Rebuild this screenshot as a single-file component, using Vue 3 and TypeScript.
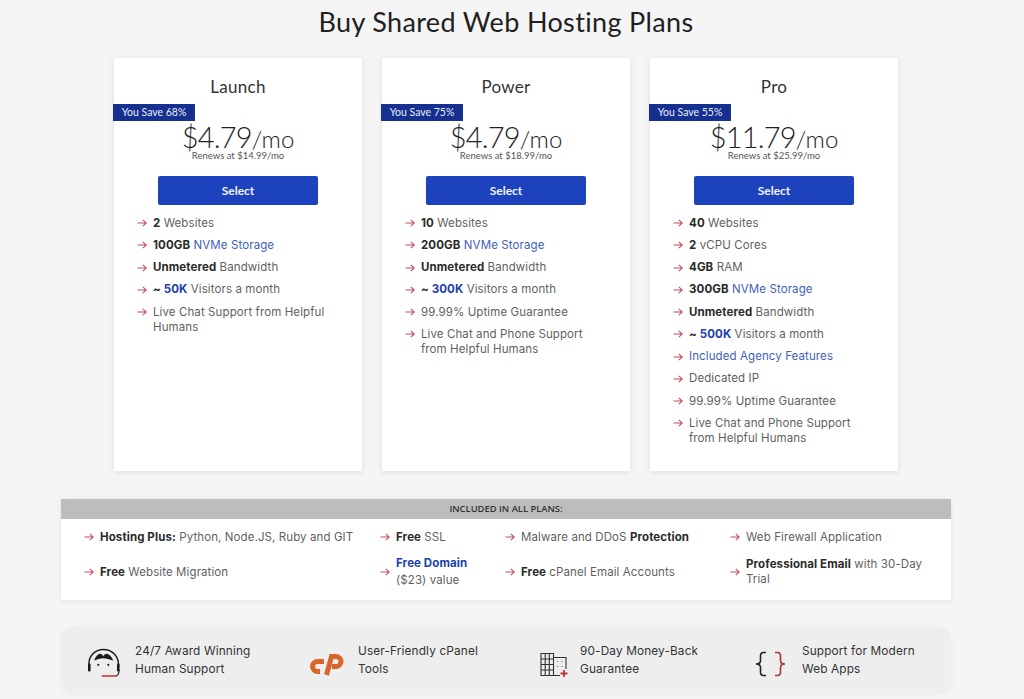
<script setup lang="ts">
interface Part {
  t: string
  b?: boolean
  link?: boolean
  block?: boolean
}

interface Plan {
  name: string
  save: string
  price: string
  renews: string
  features: Part[][]
}

const plans: Plan[] = [
  {
    name: 'Launch',
    save: 'You Save 68%',
    price: '$4.79',
    renews: 'Renews at $14.99/mo',
    features: [
      [{ t: '2', b: true }, { t: ' Websites' }],
      [{ t: '100GB', b: true }, { t: ' ' }, { t: 'NVMe Storage', link: true }],
      [{ t: 'Unmetered', b: true }, { t: ' Bandwidth' }],
      [{ t: '~ ', b: true }, { t: '50K', b: true, link: true }, { t: ' Visitors a month' }],
      [{ t: 'Live Chat Support from Helpful Humans' }],
    ],
  },
  {
    name: 'Power',
    save: 'You Save 75%',
    price: '$4.79',
    renews: 'Renews at $18.99/mo',
    features: [
      [{ t: '10', b: true }, { t: ' Websites' }],
      [{ t: '200GB', b: true }, { t: ' ' }, { t: 'NVMe Storage', link: true }],
      [{ t: 'Unmetered', b: true }, { t: ' Bandwidth' }],
      [{ t: '~ ', b: true }, { t: '300K', b: true, link: true }, { t: ' Visitors a month' }],
      [{ t: '99.99% Uptime Guarantee' }],
      [{ t: 'Live Chat and Phone Support from Helpful Humans' }],
    ],
  },
  {
    name: 'Pro',
    save: 'You Save 55%',
    price: '$11.79',
    renews: 'Renews at $25.99/mo',
    features: [
      [{ t: '40', b: true }, { t: ' Websites' }],
      [{ t: '2', b: true }, { t: ' vCPU Cores' }],
      [{ t: '4GB', b: true }, { t: ' RAM' }],
      [{ t: '300GB', b: true }, { t: ' ' }, { t: 'NVMe Storage', link: true }],
      [{ t: 'Unmetered', b: true }, { t: ' Bandwidth' }],
      [{ t: '~ ', b: true }, { t: '500K', b: true, link: true }, { t: ' Visitors a month' }],
      [{ t: 'Included Agency Features', link: true }],
      [{ t: 'Dedicated IP' }],
      [{ t: '99.99% Uptime Guarantee' }],
      [{ t: 'Live Chat and Phone Support from Helpful Humans' }],
    ],
  },
]

const included: Part[][] = [
  [{ t: 'Hosting Plus:', b: true }, { t: ' Python, Node.JS, Ruby and GIT' }],
  [{ t: 'Free', b: true }, { t: ' SSL' }],
  [{ t: 'Malware and DDoS ' }, { t: 'Protection', b: true }],
  [{ t: 'Web Firewall Application' }],
  [{ t: 'Free', b: true }, { t: ' Website Migration' }],
  [{ t: 'Free Domain', b: true, link: true, block: true }, { t: '($23) value', block: true }],
  [{ t: 'Free', b: true }, { t: ' cPanel Email Accounts' }],
  [{ t: 'Professional Email', b: true }, { t: ' with 30-Day Trial' }],
]
</script>

<template>
  <div class="page">
    <h1 class="title">Buy Shared Web Hosting Plans</h1>

    <div class="plans">
      <div v-for="plan in plans" :key="plan.name" class="card">
        <div class="plan-name">{{ plan.name }}</div>
        <div class="save">{{ plan.save }}</div>
        <div class="price">{{ plan.price }}<span class="per">/mo</span></div>
        <div class="renews">{{ plan.renews }}</div>
        <button class="select">Select</button>
        <ul class="features">
          <li v-for="(f, i) in plan.features" :key="i">
            <svg class="arrow" viewBox="0 0 10 8"><path d="M0.500 4H9M5.800 0.800 9.200 4 5.800 7.200" /></svg>
            <span>
              <template v-for="(p, j) in f" :key="j"><span :class="{ b: p.b, link: p.link, block: p.block }">{{ p.t }}</span></template>
            </span>
          </li>
        </ul>
      </div>
    </div>

    <div class="included">
      <div class="included-head">INCLUDED IN ALL PLANS:</div>
      <div class="included-grid">
        <div v-for="(f, i) in included" :key="i" class="inc-item" :class="{ tall: i === 5 }">
          <svg class="arrow" viewBox="0 0 10 8"><path d="M0.500 4H9M5.800 0.800 9.200 4 5.800 7.200" /></svg>
          <span>
            <template v-for="(p, j) in f" :key="j"><span :class="{ b: p.b, link: p.link, block: p.block }">{{ p.t }}</span></template>
          </span>
        </div>
      </div>
    </div>

    <div class="perks">
      <div class="perk p1">
        <svg class="perk-icon" viewBox="0 0 36 34" width="36" height="34">
          <path d="M3 23C2 13 9 6.500 17.500 6.500S33 13 32.500 23" fill="none" stroke="#1b1b1b" stroke-width="1.500" />
          <path d="M8 17.500C10 13 12 10.800 14 10.800c1.500 0 2.500 1 3.300 2.400.8-1.400 1.900-2.400 3.400-2.400 2.200 0 4.600 2.200 6.600 6.700-4-1.300-7-2.300-10-2.300s-6 1-9.300 2.300z" fill="#1b1b1b" />
          <circle cx="12.300" cy="21.800" r="1.100" fill="#1b1b1b" />
          <circle cx="22.300" cy="21.800" r="1.100" fill="#1b1b1b" />
          <rect x="2" y="20.500" width="2.600" height="8" rx="1.200" fill="#1b1b1b" />
          <rect x="31" y="20.500" width="2.600" height="8" rx="1.200" fill="#1b1b1b" />
          <path d="M33 27c0 4-1 5.500-3 6" fill="none" stroke="#1b1b1b" stroke-width="1.100" />
          <path d="M15.700 33h15" stroke="#b5403f" stroke-width="1.600" />
        </svg>
        <div class="perk-text">24/7 Award Winning<br />Human Support</div>
      </div>
      <div class="perk p2">
        <svg class="perk-icon" viewBox="0 0 36 32" width="36" height="32">
          <path d="M16 17.500H9.500a5 5 0 0 0 0 10H12" fill="none" stroke="#d9652b" stroke-width="5" />
          <path d="M18.500 31 23.500 12.500H28a5 5 0 0 1 0 10H24" fill="none" stroke="#d9652b" stroke-width="5" />
        </svg>
        <div class="perk-text">User-Friendly cPanel<br />Tools</div>
      </div>
      <div class="perk p3">
        <svg class="perk-icon" viewBox="0 0 28 32" width="28" height="32">
          <path d="M1 9.500h12.500v22H1zM1 15h12.500M1 20.500h12.500M1 26h12.500M5.200 9.500v22M9.300 9.500v22M13.500 13.500H26V25M1 31.500h19" fill="none" stroke="#333" stroke-width="1.100" />
          <path d="M17 17.500h1.200M21.500 17.500h1.200M17 22.500h1.200M21.500 22.500h1.200" stroke="#777" stroke-width="1.100" />
          <path d="M24 26v7M20.500 29.500h7" stroke="#b5343a" stroke-width="1.800" />
        </svg>
        <div class="perk-text">90-Day Money-Back<br />Guarantee</div>
      </div>
      <div class="perk p4">
        <svg class="perk-icon" viewBox="0 0 36 32" width="36" height="32">
          <path d="M13 8.500H10.500C8 8.500 7.500 9.500 7.500 12v4.500c0 2-1.500 3.500-4.500 3.500 3 0 4.500 1.500 4.500 3.500V28c0 2.500.5 3.500 3 3.500H13" fill="none" stroke="#222" stroke-width="1.600" />
          <path d="M22 8.500h2.500c2.500 0 3 1 3 3.500v4.500c0 2 1.500 3.500 4.500 3.500-3 0-4.500 1.500-4.500 3.500V28c0 2.500-.5 3.500-3 3.500H22" fill="none" stroke="#a8323a" stroke-width="1.600" />
        </svg>
        <div class="perk-text">Support for Modern<br />Web Apps</div>
      </div>
    </div>
  </div>
</template>

<style scoped>
.page {
  width: 890px;
  margin-left: 61px;
  padding-bottom: 7px;
  font-family: Inter, 'Open Sans', sans-serif;
  color: #5f5f5f;
}

.title {
  margin: 0;
  height: 58px;
  padding-top: 5px;
  box-sizing: border-box;
  text-align: center;
  font-family: Lato, sans-serif;
  font-size: 27px;
  line-height: 34px;
  font-weight: 400;
  letter-spacing: 0.35px;
  color: #1f1f1f;
}

.plans {
  display: flex;
  justify-content: center;
  gap: 20px;
}

.card {
  position: relative;
  width: 248px;
  height: 413px;
  padding-top: 19px;
  box-sizing: border-box;
  background: #fff;
  box-shadow: 0 1px 6px rgba(0, 0, 0, 0.1);
  display: flex;
  flex-direction: column;
  align-items: center;
}

.plan-name {
  font-family: Lato, sans-serif;
  font-size: 17px;
  line-height: 20px;
  letter-spacing: 0.3px;
  color: #333;
}

.save {
  position: absolute;
  left: -1px;
  top: 46px;
  width: 82px;
  height: 17px;
  background: #15308f;
  color: #e8ecf8;
  font-family: Lato, sans-serif;
  font-size: 10.500px;
  line-height: 17px;
  text-align: center;
}

.price {
  margin-top: 27px;
  font-family: Lato, sans-serif;
  font-size: 29px;
  line-height: 26px;
  font-weight: 300;
  letter-spacing: -0.8px;
  color: #222;
}

.per {
  font-size: 24px;
  line-height: 20px;
  letter-spacing: 0;
}

.renews {
  font-family: Lato, sans-serif;
  font-size: 9.500px;
  line-height: 11px;
  color: #555;
}

.select {
  margin-top: 15px;
  width: 160px;
  height: 29px;
  border: 0;
  border-radius: 2px;
  background: #1c42bd;
  color: #f2f4fb;
  font-family: Lato, sans-serif;
  font-size: 12px;
  font-weight: 700;
}

.features {
  list-style: none;
  margin: 7px 0 0;
  padding: 0 23px;
  width: 100%;
  box-sizing: border-box;
}

.features li {
  display: flex;
  align-items: flex-start;
  gap: 6px;
  font-size: 11.500px;
  line-height: 15px;
  padding: 3.630px 0;
  letter-spacing: 0.1px;
}

.features li .arrow {
  margin-top: 3.500px;
}

.arrow {
  flex: none;
  width: 10px;
  height: 8px;
}

.arrow path {
  fill: none;
  stroke: #c4505e;
  stroke-width: 1.100;
}

.b {
  font-weight: 700;
  color: #2a2a2a;
}

.link {
  color: #3f5fb8;
}

.b.link {
  color: #1d3fae;
}

.block {
  display: block;
}

.included {
  margin-top: 28px;
  height: 101px;
  background: #fff;
  box-shadow: 0 1px 6px rgba(0, 0, 0, 0.08);
}

.included-head {
  height: 20px;
  background: #bdbdbd;
  text-align: center;
  font-family: 'Open Sans', sans-serif;
  font-size: 9.400px;
  line-height: 20px;
  font-weight: 600;
  color: #333;
}

.included-grid {
  display: grid;
  grid-template-columns: 296px 125px 225px 1fr;
  grid-template-rows: 36px 34px;
  padding: 0 23px;
}

.inc-item {
  display: flex;
  align-items: center;
  gap: 6px;
  font-size: 11.500px;
  line-height: 15px;
  letter-spacing: 0.1px;
}

.inc-item.tall {
  line-height: 17px;
}

.perks {
  margin-top: 27px;
  height: 65px;
  background: #eeeeee;
  border-radius: 12px;
  box-shadow: 0 2px 6px rgba(0, 0, 0, 0.05);
  display: grid;
  grid-template-columns: 222px 232px 213px 1fr;
  padding-left: 25px;
  align-items: center;
}

.perk {
  display: flex;
  align-items: center;
}

.perk-icon {
  flex: none;
  overflow: visible;
}

.p1 .perk-icon {
  margin-right: 13px;
}

.p2 .perk-icon {
  margin-right: 14px;
}

.p3 .perk-icon {
  margin-right: 12px;
}

.p4 .perk-icon {
  margin-right: 13px;
}

.perk-text {
  font-size: 11.800px;
  line-height: 18px;
  color: #333;
  letter-spacing: 0.15px;
}
</style>

<style>
html,
body {
  background: #f5f5f5;
}
</style>
